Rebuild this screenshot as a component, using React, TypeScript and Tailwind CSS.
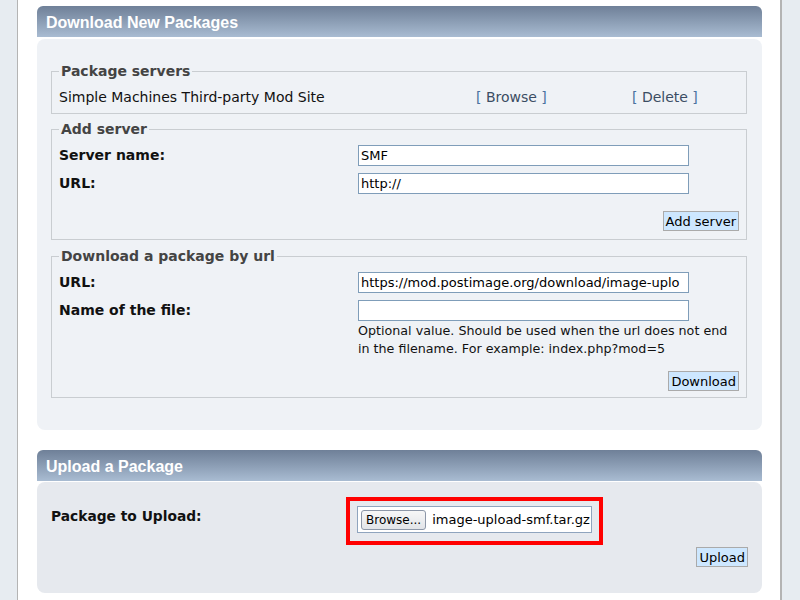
import React from "react";

const font = { fontFamily: '"DejaVu Sans", Verdana, sans-serif' };
const headFont = { fontFamily: '"Liberation Sans", Arial, sans-serif' };

function Header({ title }: { title: string }) {
  return (
    <div
      style={headFont}
      className="h-[31px] rounded-t-[6px] bg-gradient-to-b from-[#6f8098] to-[#a9bcd2] pl-[9px] pt-[2px] flex items-center text-white font-bold text-[16px] leading-none"
    >
      {title}
    </div>
  );
}

function Legend({ children }: { children: React.ReactNode }) {
  return (
    <legend className="px-[2px] text-[14px] leading-[18px] font-bold text-[#444]">{children}</legend>
  );
}

function TextInput({ value }: { value?: string }) {
  return (
    <div className="w-[331px] h-[21px] border border-[#7f9db9] bg-white px-[2px] flex items-center text-[13px] text-black whitespace-nowrap">
      {value}
    </div>
  );
}

function Btn({ children }: { children: React.ReactNode }) {
  return (
    <div className="h-[20px] px-[2px] border border-[#aaa] bg-[#cde7ff] flex items-center text-[13px] text-black leading-none">
      {children}
    </div>
  );
}

export default function App() {
  return (
    <div style={font} className="w-[800px] h-[600px] flex bg-white text-[14px] text-[#111] overflow-hidden">
      <div className="w-[18px] shrink-0 bg-[#e7ecf1] border-r border-[#b4b4b4]" />
      <div className="flex-1 pl-[19px] pr-[18px] pt-[6px]">
        <Header title="Download New Packages" />
        <div className="mt-[2px] rounded-[8px] bg-[#eff2f6] pl-[14px] pr-[15px] pt-[23px] pb-[32px] flex flex-col gap-[6px]">
          <fieldset className="border border-[#c9cdd1] px-[7px] pt-[8px] pb-[7px] min-w-0">
            <Legend>Package servers</Legend>
            <div className="flex items-center h-[18px] leading-[18px]">
              <span className="w-[417px]">Simple Machines Third-party Mod Site</span>
              <span className="w-[156px] text-[#4a72a0]">
                [ <span className="text-[#3b4d63]">Browse</span> ]
              </span>
              <span className="text-[#4a72a0]">
                [ <span className="text-[#3b4d63]">Delete</span> ]
              </span>
            </div>
          </fieldset>

          <fieldset className="border border-[#c9cdd1] px-[7px] pt-[7px] pb-[8px] min-w-0">
            <Legend>Add server</Legend>
            <div className="flex flex-col gap-[7px]">
              <div className="flex items-center">
                <span className="w-[299px] font-bold">Server name:</span>
                <TextInput value="SMF" />
              </div>
              <div className="flex items-center">
                <span className="w-[299px] font-bold">URL:</span>
                <TextInput value="http://" />
              </div>
            </div>
            <div className="flex justify-end mt-[17px]">
              <Btn>Add server</Btn>
            </div>
          </fieldset>

          <fieldset className="mt-[1px] border border-[#c9cdd1] px-[7px] pt-[7px] pb-[6px] min-w-0">
            <Legend>Download a package by url</Legend>
            <div className="flex flex-col gap-[7px]">
              <div className="flex items-center">
                <span className="w-[299px] font-bold">URL:</span>
                <TextInput value="https://mod.postimage.org/download/image-uplo" />
              </div>
              <div className="flex items-start">
                <span className="w-[299px] font-bold leading-[21px]">Name of the file:</span>
                <div className="flex flex-col">
                  <TextInput />
                  <div className="w-[380px] text-[12.7px] leading-[18px] mt-[1px]">
                    Optional value. Should be used when the url does not end in the filename. For example: index.php?mod=5
                  </div>
                </div>
              </div>
            </div>
            <div className="flex justify-end mt-[13px]">
              <Btn>Download</Btn>
            </div>
          </fieldset>
        </div>

        <div className="mt-[20px]">
          <Header title="Upload a Package" />
          <div className="mt-[1px] rounded-[8px] bg-[#e6e9ee] pl-[14px] pr-[14px] pt-[15px] h-[111px]">
            <div className="flex items-start">
              <span className="w-[295px] font-bold text-[13.8px] leading-[38px]">Package to Upload:</span>
              <div className="border-4 border-[#ff0000] pl-[7px] pr-[7px] pt-[5px] pb-[8px]">
                <div className="h-[27px] w-[235px] border border-[#8fa4be] bg-white flex items-center pl-[3px] gap-[6px]">
                  <div className="h-[20px] px-[4px] rounded-[3px] border border-[#8d97a8] bg-gradient-to-b from-[#f7f7f7] to-[#e2e4e8] flex items-center text-[12px] text-black">
                    Browse...
                  </div>
                  <span className="text-[13px] text-black whitespace-nowrap">image-upload-smf.tar.gz</span>
                </div>
              </div>
            </div>
            <div className="flex justify-end mt-[2px]">
              <Btn>Upload</Btn>
            </div>
          </div>
        </div>
      </div>
      <div className="w-[20px] shrink-0 bg-[#e7ecf1] border-l-2 border-[#b4b4b4]" />
    </div>
  );
}
